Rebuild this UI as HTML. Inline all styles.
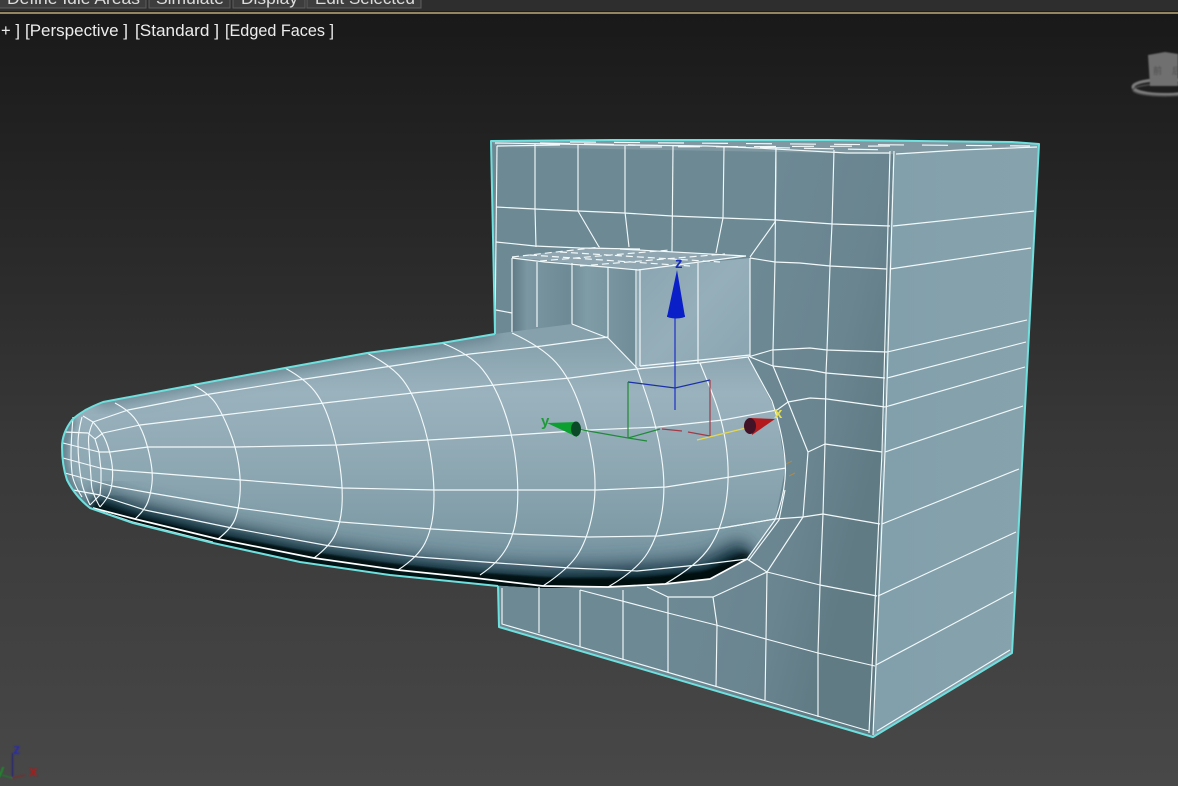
<!DOCTYPE html>
<html><head><meta charset="utf-8"><style>
html,body{margin:0;padding:0;background:#2a2a2a}
svg{display:block}
.w polyline,.w line,.w path{fill:none;stroke:#f2f9fa;stroke-width:1.15;stroke-linejoin:round}
text{font-family:"Liberation Sans","Noto Sans CJK SC",sans-serif}
</style></head><body>
<svg width="1178" height="786" viewBox="0 0 1178 786" xmlns="http://www.w3.org/2000/svg" style="width:1178px;height:786px">
<defs>
<linearGradient id="bg" gradientUnits="userSpaceOnUse" x1="0" y1="14" x2="0" y2="786">
<stop offset="0" stop-color="#191919"/><stop offset=".37" stop-color="#2d2d2d"/><stop offset=".55" stop-color="#383838"/><stop offset="1" stop-color="#484848"/></linearGradient>
<linearGradient id="front" gradientUnits="userSpaceOnUse" x1="490" y1="300" x2="890" y2="400">
<stop offset="0" stop-color="#6c8994"/><stop offset=".6" stop-color="#6d8994"/><stop offset=".85" stop-color="#6a8590"/><stop offset="1" stop-color="#617b85"/></linearGradient>
<linearGradient id="side" gradientUnits="userSpaceOnUse" x1="890" y1="300" x2="1030" y2="300">
<stop offset="0" stop-color="#82a0ab"/><stop offset="1" stop-color="#86a2ad"/></linearGradient>
<linearGradient id="tube" gradientUnits="userSpaceOnUse" x1="0" y1="340" x2="0" y2="580">
<stop offset="0" stop-color="#86a1ac"/><stop offset=".22" stop-color="#9ab2bd"/><stop offset=".55" stop-color="#8da7b2"/><stop offset=".8" stop-color="#7e9ba6"/><stop offset="1" stop-color="#7390a0"/></linearGradient>
<linearGradient id="wall" gradientUnits="userSpaceOnUse" x1="512" y1="300" x2="637" y2="300">
<stop offset="0" stop-color="#5f7a84"/><stop offset=".12" stop-color="#7b97a2"/><stop offset=".45" stop-color="#6d8a95"/><stop offset=".6" stop-color="#7f9ca7"/><stop offset="1" stop-color="#6f8c97"/></linearGradient>
<linearGradient id="blk" gradientUnits="userSpaceOnUse" x1="640" y1="260" x2="750" y2="360">
<stop offset="0" stop-color="#8aa5b1"/><stop offset=".5" stop-color="#95aeba"/><stop offset="1" stop-color="#8aa5b1"/></linearGradient>
<filter id="b0" x="-20%" y="-30%" width="140%" height="160%"><feGaussianBlur stdDeviation="10"/></filter>
<filter id="b1" x="-20%" y="-20%" width="140%" height="140%"><feGaussianBlur stdDeviation="7"/></filter>
<filter id="b2" x="-20%" y="-20%" width="140%" height="140%"><feGaussianBlur stdDeviation="3.5"/></filter>
<filter id="b3"><feGaussianBlur stdDeviation="0.7"/></filter>
<clipPath id="tc"><polygon points="495,334 442,343 367,353 285,368 193,385 103,402 85,409 73,419 65,432 62,447 63,465 69,484 78,498 90,508 133,523 213,543 300,562 390,575 490,585 540,588 608,587 665,584 710,579 747,559 775,520 786,465 782,447 777,413 748,357 637,368 608,338 572,324"/></clipPath>
</defs>

<rect width="1178" height="786" fill="url(#bg)"/>

<!-- top bar -->
<rect x="0" y="0" width="1178" height="11" fill="#2e2e2e"/>
<rect x="0" y="12" width="1178" height="2" fill="#94875f"/>
<rect x="0" y="11" width="1178" height="1" fill="#1e1e1e"/>
<g fill="#3d3d3d" stroke="#5f5f5f" stroke-width="1">
<rect x="-2" y="-3" width="148" height="11"/><rect x="149" y="-3" width="81" height="11"/><rect x="233" y="-3" width="72" height="11"/><rect x="307" y="-3" width="114" height="11"/></g>
<g fill="#dcdcdc" font-size="17">
<text x="7" y="4" textLength="133" lengthAdjust="spacingAndGlyphs">Define Idle Areas</text>
<text x="156" y="4" textLength="68" lengthAdjust="spacingAndGlyphs">Simulate</text>
<text x="241" y="4" textLength="57" lengthAdjust="spacingAndGlyphs">Display</text>
<text x="315" y="4" textLength="100" lengthAdjust="spacingAndGlyphs">Edit Selected</text></g>

<!-- viewport label -->
<g fill="#ececec" font-size="16.5">
<text x="1" y="36" textLength="19" lengthAdjust="spacing">+ ]</text>
<text x="25" y="36" textLength="103" lengthAdjust="spacingAndGlyphs">[Perspective ]</text>
<text x="135" y="36" textLength="84" lengthAdjust="spacingAndGlyphs">[Standard ]</text>
<text x="225" y="36" textLength="109" lengthAdjust="spacingAndGlyphs">[Edged Faces ]</text></g>

<!-- view cube -->
<g filter="url(#b3)">
<ellipse cx="1165" cy="87" rx="32" ry="7.5" fill="none" stroke="#7d7d7d" stroke-width="3"/>
<ellipse cx="1165" cy="90" rx="32" ry="6" fill="none" stroke="#4e4e4e" stroke-width="1.5"/>
<polygon points="1148,55 1165,52 1178,54 1178,86 1150,86" fill="#6f6f6f"/>
<text x="1153" y="74" font-size="9" fill="#4a4a4a">前</text>
<text x="1172" y="74" font-size="9" fill="#4a4a4a">后</text>
</g>

<!-- box faces -->
<polygon points="491,141 612,140 893,153 873,737 499,627 498,586 495,334" fill="url(#front)"/>
<polygon points="893,153 1039,144 1012,653 873,737" fill="url(#side)"/>
<polygon points="491,141 612,140 735,140 828,140 919,141 1012,142 1039,144 893,154 497,147" fill="#7f98a2"/>

<!-- block -->
<polygon points="512,258 637,269 637,368 608,338 572,324 512,334" fill="url(#wall)"/>
<polygon points="637,269 750,258 750,357 637,368" fill="url(#blk)"/>
<polygon points="512,257 595,247 746,256 638,270" fill="#90a7b1"/>

<!-- tube -->
<g clip-path="url(#tc)">
<rect x="50" y="300" width="760" height="300" fill="url(#tube)"/>
<polyline points="60,340 103,400 193,383 285,366 367,351 442,341 495,332" fill="none" stroke="#5b7884" stroke-width="10" filter="url(#b1)"/>
<polyline points="90,505 133,520 213,540 300,558 390,571 490,581 540,584 608,583 665,580 710,575 750,555" fill="none" stroke="#2a4a58" stroke-width="36" filter="url(#b0)"/>
<polyline points="90,512 133,528 213,548 300,567 390,580 490,590 540,593 608,592 665,589 710,584 750,562" fill="none" stroke="#06202b" stroke-width="32" filter="url(#b1)"/>
<polyline points="90,510 133,525 213,545 300,564 390,577 490,587 540,590 608,589 665,586 710,581 750,560" fill="none" stroke="#02090d" stroke-width="16" filter="url(#b2)"/>
<polygon points="93,508 135,519 218,539 314,558 398,570 475,578 543,586 665,584 710,579 747,559 700,572 640,578 560,578 470,572 380,562 300,550 200,532" fill="#020a0e" opacity=".75" filter="url(#b3)"/>
<path d="M73 419 Q62 440 64 465 Q70 490 90 508" fill="none" stroke="#567581" stroke-width="6" filter="url(#b2)"/>
</g>

<!-- mesh lines -->
<g class="w">
<!-- box top/edges -->
<polyline points="495,143 613,145 707,146 757,148 847,153 890,153"/>
<line x1="497" y1="146" x2="560" y2="145"/>
<line x1="540" y1="143" x2="892" y2="150" stroke-dasharray="30 14"/>
<line x1="570" y1="142" x2="1030" y2="146" stroke-dasharray="26 18"/>
<line x1="640" y1="147" x2="900" y2="146" stroke-dasharray="22 16"/>
<polyline points="896,154 960,150 1037,147"/>
<polyline points="497,146 495,332"/>
<polyline points="502,588 502,624 869,731"/>
<polyline points="890,151 882,452 869,733"/>
<polyline points="894,151 885,452 873,735"/>
<polyline points="877,731 1010,650"/>
<!-- right face -->
<polyline points="893,226 1034,211"/>
<polyline points="890,269 1031,248"/>
<polyline points="887,352 1027,320"/>
<polyline points="887,378 1026,342"/>
<polyline points="885,407 1025,367"/>
<polyline points="885,452 1023,406"/>
<polyline points="882,524 1019,469"/>
<polyline points="878,596 1016,532"/>
<polyline points="876,665 1013,592"/>
<!-- front horizontals -->
<polyline points="496,207 535,209 578,211 624,213 672,216 723,218 776,220 833,224 890,226"/>
<polyline points="496,242 535,246 580,248 640,249"/>
<polyline points="750,258 775,262 800,263 830,266 887,269"/>
<polyline points="748,357 772,350 810,348 827,350 887,352"/>
<polyline points="750,357 773,366 810,370 826,373 885,378"/>
<polyline points="777,410 788,402 810,398 827,399 885,407"/>
<polyline points="808,452 825,444 882,452"/>
<polyline points="722,528 775,519 803,517 823,514 880,524"/>
<polyline points="747,559 767,572 820,585 877,596"/>
<polyline points="580,590 668,613 716,625 766,639 818,653 875,666"/>
<polyline points="767,572 713,597 668,597 647,587"/>
<polyline points="496,310 512,313"/>
<!-- front verticals -->
<polyline points="535,144 535,209 536,247"/>
<polyline points="578,145 578,211 599,247"/>
<polyline points="625,146 625,212 629,247"/>
<polyline points="673,146 672,252"/>
<polyline points="724,147 723,218 716,253"/>
<polyline points="776,148 775,222 750,257"/>
<polyline points="776,148 775,262 773,350 773,366 788,402 808,452 803,517 767,572"/>
<polyline points="834,150 832,224 830,266 827,350 826,373 825,444 823,514 820,585 818,653 818,717"/>
<polyline points="539,587 539,633"/>
<polyline points="580,590 580,647"/>
<polyline points="623,590 623,660"/>
<polyline points="668,597 668,672"/>
<polyline points="713,597 717,625 716,687"/>
<polyline points="767,572 766,639 765,700"/>
<!-- block -->
<polyline points="512,258 512,332"/>
<polyline points="512,258 545,262 605,267 638,270 746,256"/>
<polyline points="620,249 746,256"/>
<line x1="512" y1="257" x2="600" y2="247" stroke-dasharray="7 4"/>
<polyline points="537,262 537,327"/>
<polyline points="572,263 572,324"/>
<polyline points="608,267 608,338"/>
<polyline points="636,269 636,368"/>
<polyline points="640,269 640,366"/>
<polyline points="698,263 698,363"/>
<polyline points="750,258 750,357"/>
<polyline points="640,366 750,355"/>
<line x1="530" y1="255" x2="690" y2="266" stroke-dasharray="7 4"/>
<line x1="560" y1="252" x2="720" y2="262" stroke-dasharray="7 4"/>
<line x1="540" y1="261" x2="670" y2="250" stroke-dasharray="7 4"/>
<line x1="580" y1="266" x2="725" y2="254" stroke-dasharray="7 4"/>
<!-- tube rings -->
<path d="M115 403 Q128 410 134 417.5 Q140 425 144 436 Q148 447 150.5 460 Q153 473 152 483 Q151 493 148 501.5 Q145 510 135 519"/>
<path d="M193 385 Q210 394 216.5 404.5 Q223 415 229.5 431 Q236 447 238.5 463.5 Q241 480 240 494 Q239 508 235.5 518 Q232 528 218 539"/>
<path d="M285 368 Q305 379 314.5 391 Q324 403 330.5 424 Q337 445 340 466.5 Q343 488 342 505 Q341 522 335.5 534 Q330 546 314 558"/>
<path d="M367 353 Q392 366 402.5 379.5 Q413 393 421 416.5 Q429 440 432 465 Q435 490 433.5 509.5 Q432 529 425 543 Q418 557 398 570"/>
<path d="M442 343 Q470 354 482.5 369.5 Q495 385 504 410 Q513 435 516 462.5 Q519 490 517 511.5 Q515 533 506.5 548 Q498 563 480 575"/>
<path d="M512 333 Q542 347 556 362.5 Q570 378 580 406.5 Q590 435 593.5 462.5 Q597 490 592.5 513.5 Q588 537 579 552.5 Q570 568 543 586"/>
<path d="M572 324 L608 338 L637 368 L647 397.5 Q657 427 661.5 457 Q666 487 662 511.5 Q658 536 647.5 553 Q637 570 608 587"/>
<path d="M700 363 L711.5 391.5 Q723 420 726.5 448.5 Q730 477 726 502.5 Q722 528 710 546.5 Q698 565 665 584"/>
<path d="M748 357 L772 401 Q785 440 785.5 470 Q785 495 775 520 L747 559 L710 579"/>
<polyline points="785,490 779,520 749,560"/>
<!-- tube longitudinal -->
<polyline points="93,422 128,410 210,394 305,379 392,366 470,354 542,346 608,337"/>
<polyline points="103,433 140,425 223,415 324,403 413,393 495,385 570,378 637,369 700,363 748,357"/>
<polyline points="110,452 148,447 236,447 337,445 429,440 513,435 590,430 658,427 723,420 777,410"/>
<polyline points="113,470 153,473 241,480 343,488 435,490 519,490 597,490 666,487 730,477 786,468"/>
<polyline points="112,486 151,493 239,508 341,522 432,529 515,534 588,537 658,536 722,528 775,519"/>
<polyline points="108,498 145,510 232,528 330,546 418,557 498,563 570,568 637,571 698,565 747,559"/>
<polyline points="93,508 135,519 218,539 314,558 398,570 475,578 543,586 608,587 665,584 710,579 747,559" style="stroke-width:1.7;stroke:#fff"/>
<polyline points="90,508 133,522 213,542"/>
<!-- nose -->
<path d="M93 422 Q103 433 106.5 442.5 Q110 452 111.5 461 Q113 470 112.5 478 Q112 486 110 492 Q108 498 100 507"/>
<path d="M73 417 Q72 430 71.5 438.5 Q71 447 71 455 Q71 463 72 473 Q73 483 82 497"/>
<path d="M82 417 Q78 433 78 443 Q78 453 79 463 Q80 473 81.5 481.5 Q83 490 90 505"/>
<path d="M93 422 Q88 433 88.5 441.5 Q89 450 90 463.5 Q91 477 91.5 485 Q92 493 100 507"/>
<polyline points="95,439 99,452 101,470 101,483 100,495"/>
<polyline points="83,416 93,422"/>
<polyline points="65,432 88,433 95,439 103,433"/>
<polyline points="63,443 99,452 110,452"/>
<polyline points="63,458 100,468 113,470"/>
<polyline points="65,473 101,483 112,486"/>
<polyline points="73,490 100,495 108,498"/>
<polyline points="90,505 100,495"/>
</g>

<!-- cyan outline -->
<g fill="none" stroke="#6ee0de" stroke-width="2" stroke-linejoin="round">
<polyline points="495,334 491,141 612,140 735,140 828,140 919,141 1012,142 1039,144 1012,653 873,737 499,627 498,586"/>
<path d="M495 334 L442 343 L367 353 L285 368 L193 385 L103 402 Q82 410 72 420 Q62 433 62 447 Q62 465 67 480 Q75 496 90 508 L133 523 L213 543 L300 562 L390 575 L498 586"/>
</g>

<!-- gizmo -->
<g fill="none" stroke-width="1.2">
<polyline points="628,382 675,388 710,380" stroke="#1a2fa8"/>
<line x1="675" y1="317" x2="675" y2="410" stroke="#1a2fc8"/>
<polyline points="628,382 628,438" stroke="#1f8a2f"/>
<polyline points="577,429 628,438 660,429" stroke="#1f8a3a"/>
<line x1="628" y1="438" x2="647" y2="441" stroke="#1f8a3a"/>
<polyline points="710,380 710,436" stroke="#a23a45"/>
<line x1="710" y1="436" x2="688" y2="432" stroke="#a23a45"/>
<line x1="682" y1="431" x2="662" y2="429" stroke="#a23a45"/>
<line x1="750" y1="427" x2="697" y2="440" stroke="#e6d84e"/>
</g>
<polygon points="677,270 667,317 685,317" fill="#0a1fc8"/>
<ellipse cx="676" cy="316" rx="9" ry="2.5" fill="#0a1fc8"/>
<polygon points="547,423 577,422 577,437" fill="#0ca030"/>
<ellipse cx="576" cy="429" rx="5" ry="7.5" fill="#0b4a28"/>
<polygon points="775,419 750,418 752,435" fill="#b31a1e"/>
<ellipse cx="750" cy="426" rx="6" ry="8" fill="#421226"/>
<text x="675" y="268" font-size="15" font-weight="bold" fill="#1a2fb8">z</text>
<text x="541" y="426" font-size="15" font-weight="bold" fill="#1f9a3a">y</text>
<text x="774" y="418" font-size="15" font-weight="bold" fill="#e8e04a">x</text>
<g stroke="#b08a4a" stroke-width="1"><line x1="786" y1="464" x2="792" y2="461"/><line x1="789" y1="476" x2="795" y2="473"/></g>

<!-- corner tripod -->
<g fill="none" stroke-width="1.3" filter="url(#b3)">
<line x1="12.5" y1="753" x2="12.5" y2="778" stroke="#23237f"/>
<line x1="12" y1="778" x2="25" y2="775" stroke="#7a2a2a"/>
<line x1="12" y1="778" x2="2" y2="775" stroke="#1f7a2a"/>
</g>
<text x="13" y="754" font-size="15" font-weight="bold" fill="#2a2aa8" filter="url(#b3)">z</text>
<text x="29" y="776" font-size="15" font-weight="bold" fill="#b01818" filter="url(#b3)">x</text>
<text x="-4" y="775" font-size="15" font-weight="bold" fill="#1f8a2a" filter="url(#b3)">y</text>
</svg>
</body></html>
